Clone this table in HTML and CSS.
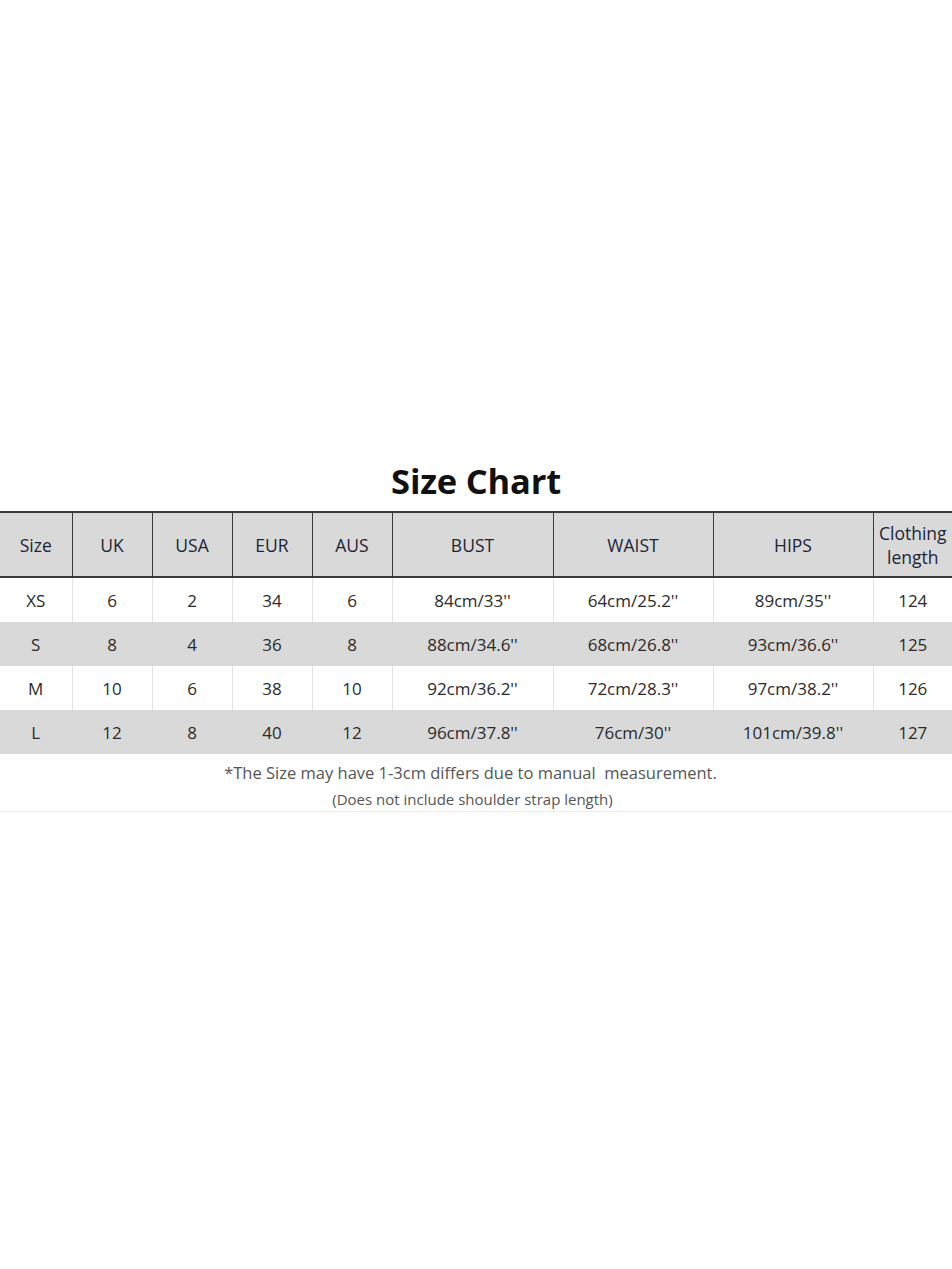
FILE: index.html
```html
<!DOCTYPE html>
<html lang="en">
<head>
<meta charset="utf-8">
<title>Size Chart</title>
<link rel="stylesheet" href="styles.css">
</head>
<body>
<main class="page">
  <h1 class="title">Size Chart</h1>
  <table class="chart">
    <colgroup>
      <col class="c-size"><col class="c-sm"><col class="c-sm"><col class="c-sm"><col class="c-sm">
      <col class="c-lg"><col class="c-lg2"><col class="c-lg2"><col class="c-len">
    </colgroup>
    <thead>
      <tr>
        <th>Size</th><th>UK</th><th>USA</th><th>EUR</th><th>AUS</th><th>BUST</th><th>WAIST</th><th>HIPS</th><th>Clothing<br>length</th>
      </tr>
    </thead>
    <tbody>
      <tr><td>XS</td><td>6</td><td>2</td><td>34</td><td>6</td><td>84cm/33''</td><td>64cm/25.2''</td><td>89cm/35''</td><td>124</td></tr>
      <tr class="alt"><td>S</td><td>8</td><td>4</td><td>36</td><td>8</td><td>88cm/34.6''</td><td>68cm/26.8''</td><td>93cm/36.6''</td><td>125</td></tr>
      <tr><td>M</td><td>10</td><td>6</td><td>38</td><td>10</td><td>92cm/36.2''</td><td>72cm/28.3''</td><td>97cm/38.2''</td><td>126</td></tr>
      <tr class="alt"><td>L</td><td>12</td><td>8</td><td>40</td><td>12</td><td>96cm/37.8''</td><td>76cm/30''</td><td>101cm/39.8''</td><td>127</td></tr>
    </tbody>
  </table>
  <div class="notes">
    <p class="note">*The Size may have 1-3cm differs due to manual&nbsp; measurement.</p>
    <p class="note-sm">(Does not include shoulder strap length)</p>
  </div>
</main>
</body>
</html>
```
FILE: styles.css
```css
html, body {
  margin: 0;
  padding: 0;
  background: #ffffff;
}

.page {
  padding-top: 458px;
  font-family: "Open Sans", "Noto Sans", "DejaVu Sans", sans-serif;
  color: #222;
}

.title {
  margin: 0;
  height: 53px;
  text-align: center;
  font-size: 34.5px;
  font-weight: 700;
  line-height: 45px;
  color: #111;
  letter-spacing: -0.2px;
}

.chart {
  width: 952px;
  border-collapse: collapse;
  table-layout: fixed;
}

.c-size { width: 72px; }
.c-sm { width: 80px; }
.c-lg { width: 161px; }
.c-lg2 { width: 160px; }
.c-len { width: 79px; }

.chart th {
  height: 63px;
  padding: 0;
  background: #d9d9d9;
  border-top: 2px solid #3a3a3a;
  border-bottom: 2px solid #3a3a3a;
  border-left: 1px solid #3a3a3a;
  font-weight: 400;
  font-size: 17.5px;
  line-height: 24px;
  color: #1d2436;
  text-align: center;
}

.chart th:first-child {
  border-left: none;
}

.chart td {
  height: 44px;
  padding: 0;
  text-align: center;
  font-size: 17px;
  color: #2a2a2a;
  border-left: 1px solid #e4e4e4;
}

.chart td:first-child {
  border-left: none;
}

.chart tr.alt td {
  background: #d9d9d9;
  border-left-color: #d9d9d9;
}

.notes {
  border-bottom: 1px solid #ececec;
  text-align: center;
  color: #555;
  padding-top: 4px;
  padding-bottom: 0;
}

.note {
  margin: 0;
  padding-right: 11px;
  font-size: 16.5px;
  line-height: 30px;
}

.note-sm {
  margin: 0;
  padding-right: 7px;
  font-size: 15px;
  line-height: 23px;
}
```
